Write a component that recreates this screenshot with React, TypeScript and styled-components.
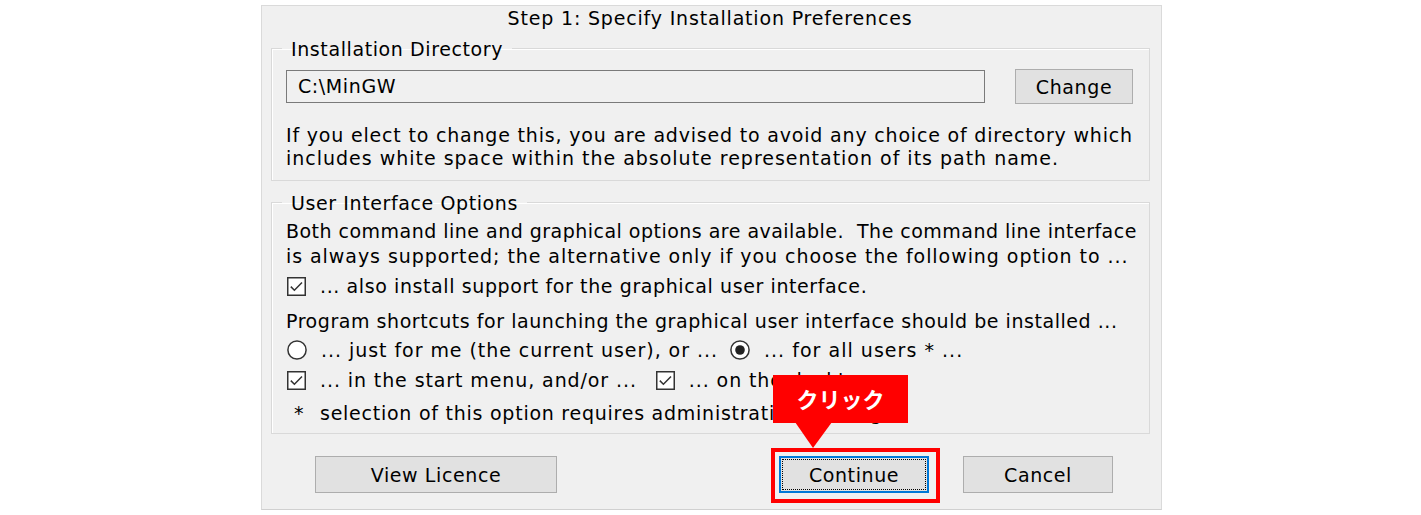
import React from "react";
import styled, { createGlobalStyle } from "styled-components";

const Global = createGlobalStyle`
  html, body { margin: 0; padding: 0; background: #ffffff; }
  body {
    font-family: "DejaVu Sans", Verdana, sans-serif;
    font-size: 19px;
    letter-spacing: 0.6px;
    color: #000000;
  }
  * { box-sizing: border-box; }
`;

const Page = styled.div`
  width: 1421px;
  height: 515px;
  padding-top: 5px;
`;

const Dialog = styled.div`
  position: relative;
  width: 901px;
  height: 505px;
  margin: 0 0 0 261px;
  background: #f0f0f0;
  border: 1px solid #dadada;
  border-bottom-color: #d0d0d0;
  display: flex;
  flex-direction: column;
  padding: 0 11px 0 9px;
`;

const Title = styled.div`
  height: 24px;
  line-height: 24px;
  text-align: center;
  padding-right: 1px;
  letter-spacing: 0.82px;
`;

const Group = styled.fieldset<{ $mt: number; $pb: number }>`
  margin: ${(p) => p.$mt}px 0 0 0;
  padding: 0 14px ${(p) => p.$pb}px 14px;
  border: 1px solid #d9d9d9;
  box-shadow: inset 1px 1px 0 #ffffff;
  min-width: 0;
`;

const Legend = styled.legend`
  margin-left: -4px;
  padding: 0 9px;
  line-height: 24px;
  height: 24px;
  transform: translateY(1px);
`;

const DirRow = styled.div`
  display: flex;
  align-items: center;
  height: 35px;
  margin-top: 9px;
`;

const PathField = styled.div`
  width: 699px;
  height: 33px;
  border: 1px solid #7a7a7a;
  background: #f0f0f0;
  line-height: 31px;
  padding-left: 11px;
`;

const Button = styled.div<{ $w: number; $h?: number }>`
  width: ${(p) => p.$w}px;
  height: ${(p) => p.$h ?? 37}px;
  background: #e1e1e1;
  border: 1px solid #adadad;
  display: flex;
  align-items: center;
  justify-content: center;
  flex-shrink: 0;
`;

const FocusButton = styled(Button)`
  border: 2px solid #0078d7;
  padding: 1px;
`;

const FocusInner = styled.div`
  width: 100%;
  height: 100%;
  border: 1px dotted #000000;
  display: flex;
  align-items: center;
  justify-content: center;
`;

const Para = styled.div<{ $mt: number; $lh: number }>`
  margin-top: ${(p) => p.$mt}px;
  line-height: ${(p) => p.$lh}px;
  white-space: pre;
`;

const Line = styled.div<{ $ls: number }>`
  letter-spacing: ${(p) => p.$ls}px;
`;

const OptionRow = styled.div<{ $mt: number }>`
  display: flex;
  align-items: center;
  height: 28px;
  margin-top: ${(p) => p.$mt}px;
  padding-left: 1px;
  white-space: pre;
`;

const Option = styled.span<{ $mr?: number; $ls?: number }>`
  display: inline-flex;
  align-items: center;
  gap: 14px;
  margin-right: ${(p) => p.$mr ?? 0}px;
  letter-spacing: ${(p) => p.$ls ?? 0.6}px;
`;

const Mark = styled.span`
  width: 19px;
  text-align: center;
  padding-left: 5px;
`;

const ButtonRow = styled.div`
  display: flex;
  align-items: center;
  margin-top: 22px;
  padding-left: 44px;
`;

const Frame = styled.div`
  position: absolute;
  left: 509px;
  top: 442px;
  width: 169px;
  height: 55px;
  border: 4px solid #ff0000;
  pointer-events: none;
`;

const Callout = styled.div`
  position: absolute;
  left: 511px;
  top: 369px;
  width: 135px;
  height: 48px;
  background: #ff0000;
  color: #ffffff;
  font-family: "Noto Sans CJK JP", "Noto Sans", sans-serif;
  font-weight: 700;
  font-size: 22px;
  letter-spacing: 0;
  display: flex;
  align-items: center;
  justify-content: center;
  padding-bottom: 2px;
  &::after {
    content: "";
    position: absolute;
    left: 22px;
    top: 47px;
    border-left: 18px solid transparent;
    border-right: 19px solid transparent;
    border-top: 26px solid #ff0000;
  }
`;

const CheckBox = () => (
  <svg width="19" height="19" viewBox="0 0 19 19">
    <rect x="0.75" y="0.75" width="17.5" height="17.5" fill="#ffffff" stroke="#333333" strokeWidth="1.5" />
    <path d="M3.8 9.6 L7.4 13.2 L15 5.4" fill="none" stroke="#333333" strokeWidth="1.5" />
  </svg>
);

const Radio = ({ on }: { on?: boolean }) => (
  <svg width="20" height="20" viewBox="0 0 20 20">
    <circle cx="10" cy="10" r="9.1" fill="#ffffff" stroke="#333333" strokeWidth="1.5" />
    {on && <circle cx="10" cy="10" r="4.8" fill="#222222" />}
  </svg>
);

export default function App() {
  return (
    <>
      <Global />
      <Page>
        <Dialog>
          <Title>Step 1: Specify Installation Preferences</Title>

          <Group $mt={6} $pb={10}>
            <Legend>Installation Directory</Legend>
            <DirRow>
              <PathField>C:\MinGW</PathField>
              <Button $w={118} $h={35} style={{ marginLeft: 30 }}>
                Change
              </Button>
            </DirRow>
            <Para $mt={20} $lh={23}>
              <Line $ls={0.81}>If you elect to change this, you are advised to avoid any choice of directory which</Line>
              <Line $ls={0.99}>includes white space within the absolute representation of its path name.</Line>
            </Para>
          </Group>

          <Group $mt={9} $pb={6}>
            <Legend>User Interface Options</Legend>
            <Para $mt={5} $lh={25}>
              <Line $ls={0.48}>{"Both command line and graphical options are available.  The command line interface"}</Line>
              <Line $ls={0.94}>is always supported; the alternative only if you choose the following option to ...</Line>
            </Para>
            <OptionRow $mt={3}>
              <Option>
                <CheckBox />
                ... also install support for the graphical user interface.
              </Option>
            </OptionRow>
            <Para $mt={9} $lh={25}>
              <Line $ls={0.55}>Program shortcuts for launching the graphical user interface should be installed ...</Line>
            </Para>
            <OptionRow $mt={2}>
              <Option $mr={12} $ls={0.95}>
                <Radio />
                ... just for me (the current user), or ...
              </Option>
              <Option $ls={1.03}>
                <Radio on />
                ... for all users * ...
              </Option>
            </OptionRow>
            <OptionRow $mt={2}>
              <Option $mr={19} $ls={0.9}>
                <CheckBox />
                ... in the start menu, and/or ...
              </Option>
              <Option $ls={0.9}>
                <CheckBox />
                ... on the desktop
              </Option>
            </OptionRow>
            <OptionRow $mt={5}>
              <Option $ls={0.75}>
                <Mark>*</Mark>
                selection of this option requires administrative privileges
              </Option>
            </OptionRow>
          </Group>

          <ButtonRow>
            <Button $w={242}>View Licence</Button>
            <FocusButton $w={150} style={{ marginLeft: 222 }}>
              <FocusInner>Continue</FocusInner>
            </FocusButton>
            <Button $w={150} style={{ marginLeft: 34 }}>
              Cancel
            </Button>
          </ButtonRow>

          <Callout>クリック</Callout>
          <Frame />
        </Dialog>
      </Page>
    </>
  );
}
